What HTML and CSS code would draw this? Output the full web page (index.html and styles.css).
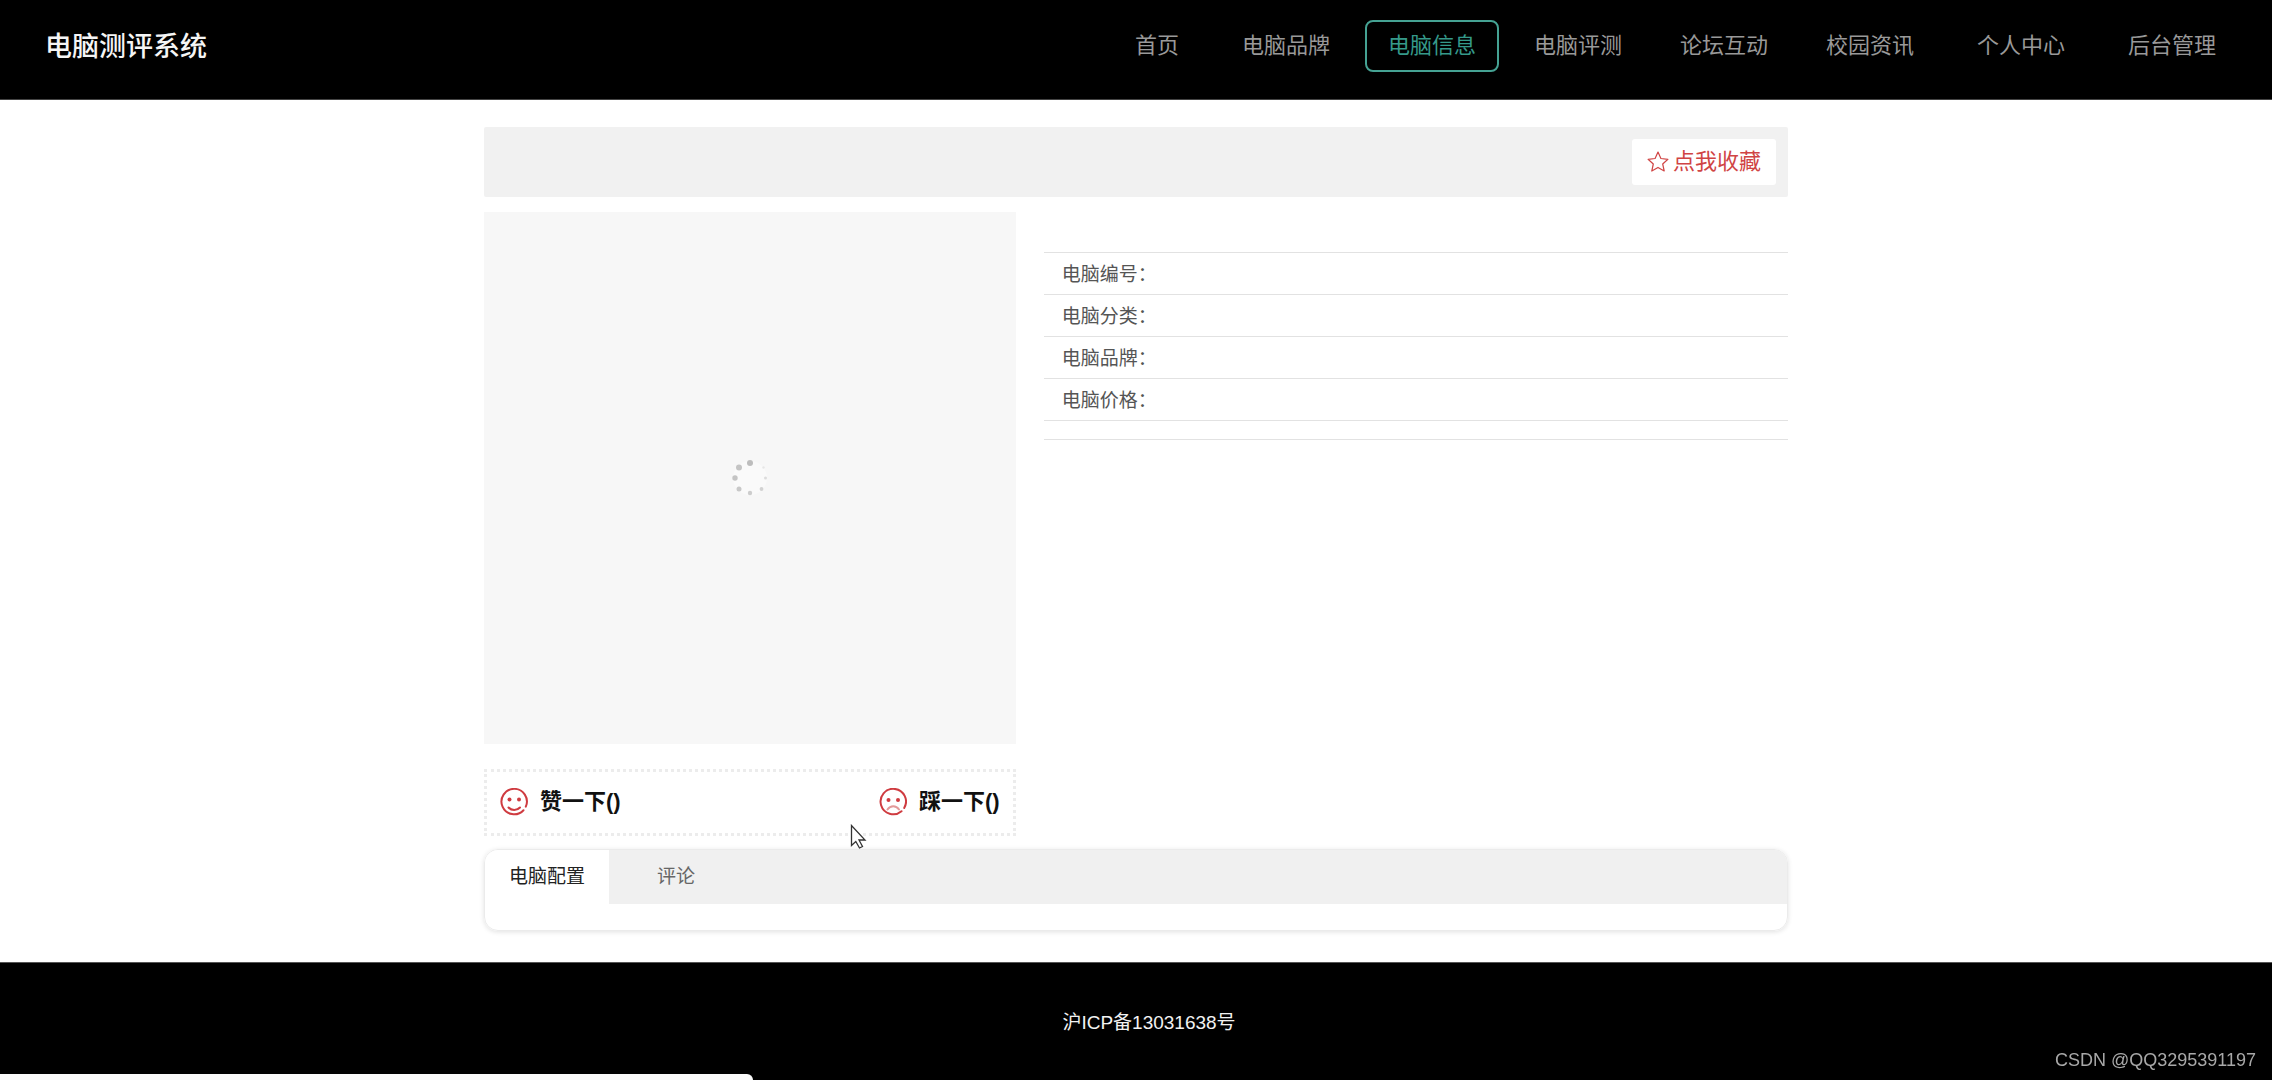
FILE: index.html
```html
<!DOCTYPE html>
<html lang="zh-CN">
<head>
<meta charset="utf-8">
<meta name="viewport" content="width=device-width, initial-scale=1">
<title>电脑测评系统</title>
<link rel="stylesheet" href="styles.css">
</head>
<body>
<header class="site-header">
  <div class="logo">电脑测评系统</div>
  <nav class="nav">
    <a class="nav-link nav-link-wide" href="#">首页</a>
    <a class="nav-link" href="#">电脑品牌</a>
    <a class="nav-link active" href="#">电脑信息</a>
    <a class="nav-link" href="#">电脑评测</a>
    <a class="nav-link" href="#">论坛互动</a>
    <a class="nav-link nav-link-wide" href="#">校园资讯</a>
    <a class="nav-link nav-link-wide" href="#">个人中心</a>
    <a class="nav-link" href="#">后台管理</a>
  </nav>
</header>

<main class="content">
  <div class="title-bar">
    <button class="favorite" type="button">
      <svg width="22" height="22" viewBox="0 0 22 22" fill="none" stroke="currentColor" stroke-width="1.2" stroke-linejoin="round"><path d="M11 1l2.900 6.500 7 .8-5.200 4.700 1.500 7-6.200-3.600L4.800 20l1.500-7L1.100 8.300l7-.8z"/></svg>
      <span>点我收藏</span>
    </button>
  </div>

  <div class="product">
    <div class="gallery">
      <div class="picture">
        <svg width="40" height="40" viewBox="0 0 40 40">
          <circle cx="20" cy="20" r="17" fill="#fafafa"/>
          <circle cx="20" cy="5" r="3" fill="#bdbdbd"/>
          <circle cx="9" cy="9.500" r="3" fill="#c4c4c4"/>
          <circle cx="5" cy="20" r="2.700" fill="#c4c4c4"/>
          <circle cx="9" cy="31" r="2.500" fill="#c8c8c8"/>
          <circle cx="20" cy="35" r="2.200" fill="#cdcdcd"/>
          <circle cx="31.500" cy="31" r="1.900" fill="#d2d2d2"/>
          <circle cx="35.500" cy="20" r="1.500" fill="#dcdcdc"/>
          <circle cx="33.500" cy="9.500" r="1.200" fill="#e6e6e6"/>
        </svg>
      </div>
      <div class="votes">
        <button class="vote" type="button">
          <svg width="28" height="28" viewBox="0 0 28 28" fill="none" stroke="#cf3b40" stroke-width="2" stroke-linecap="round"><path d="M23.500 22.200A12.700 12.700 0 1 1 25.800 18.700"/><circle cx="9.500" cy="11.500" r="2" fill="#cf3b40" stroke="none"/><circle cx="19" cy="11.500" r="2" fill="#cf3b40" stroke="none"/><path d="M8.500 19.500c3 3.300 8.500 3.300 11.500 0"/></svg>
          <span>赞一下()</span>
        </button>
        <button class="vote" type="button">
          <svg width="28" height="28" viewBox="0 0 28 28" fill="none" stroke="#cf3b40" stroke-width="2" stroke-linecap="round"><path d="M22.500 23.200A12.700 12.700 0 1 1 25.200 20"/><circle cx="9.500" cy="12" r="2" fill="#cf3b40" stroke="none"/><circle cx="19" cy="12" r="2" fill="#cf3b40" stroke="none"/><path stroke="#e29a9a" d="M8.500 21.500c3-4.300 8.500-4.300 11.500 0"/></svg>
          <span>踩一下()</span>
        </button>
        <svg class="pointer" width="18" height="26" viewBox="0 0 18 26"><path d="M1.500 1.500v20l4.300-4 3.700 6.500 3-1.500-3.500-6.500H15z" fill="#fff" stroke="#333" stroke-width="1.300"/></svg>
      </div>
    </div>

    <dl class="details">
      <div class="detail"><dt>电脑编号：</dt><dd></dd></div>
      <div class="detail"><dt>电脑分类：</dt><dd></dd></div>
      <div class="detail"><dt>电脑品牌：</dt><dd></dd></div>
      <div class="detail"><dt>电脑价格：</dt><dd></dd></div>
    </dl>
  </div>

  <section class="tab-card">
    <div class="tabs" role="tablist">
      <button class="tab selected" type="button" role="tab" aria-selected="true">电脑配置</button>
      <button class="tab" type="button" role="tab" aria-selected="false">评论</button>
    </div>
    <div class="tab-panel" role="tabpanel"></div>
  </section>
</main>

<footer class="site-footer">
  <p class="record">沪ICP备13031638号</p>
</footer>
<div class="status-bar"></div>
<div class="watermark">CSDN @QQ3295391197</div>
</body>
</html>
```
FILE: styles.css
```css
* {
  box-sizing: border-box;
}

body {
  display: flex;
  flex-direction: column;
  min-height: 100vh;
  margin: 0;
  background: #fff;
  color: #333;
  font-family: "Liberation Sans", "Noto Sans CJK SC", sans-serif;
  font-size: 19px;
}

button {
  border: 0;
  background: none;
  font-family: inherit;
  cursor: pointer;
}

.site-header {
  display: flex;
  justify-content: space-between;
  align-items: flex-start;
  height: 100px;
  padding: 20px 33px 0 45px;
  border-bottom: 1px solid #444;
  background: #000;
}

.logo {
  color: #f5f5f5;
  font-size: 27px;
  font-weight: 500;
  line-height: 54px;
}

.nav {
  display: flex;
  gap: 12px;
}

.nav-link {
  padding: 0 21px;
  border: 2px solid transparent;
  border-radius: 8px;
  color: #999;
  font-size: 22px;
  line-height: 48px;
  text-decoration: none;
  white-space: nowrap;
}

.nav-link-wide {
  margin-right: 5px;
}

.nav-link.active {
  border-color: #45a293;
  color: #35998a;
}

.content {
  width: 100%;
  max-width: 1304px;
  margin: 0 auto;
  padding: 27px 0 31px;
}

.title-bar {
  display: flex;
  justify-content: flex-end;
  align-items: center;
  height: 70px;
  padding-right: 12px;
  border-radius: 2px;
  background: #f1f1f1;
}

.favorite {
  display: flex;
  align-items: center;
  gap: 4px;
  height: 46px;
  padding: 0 15px;
  border-radius: 3px;
  background: #fff;
  color: #d04444;
  font-size: 22px;
  line-height: 26px;
}

.product {
  display: grid;
  grid-template-columns: 5fr 7fr;
  gap: 28px;
  margin-top: 15px;
}

.picture {
  display: flex;
  justify-content: center;
  align-items: center;
  aspect-ratio: 1;
  background: #f7f7f7;
}

.votes {
  position: relative;
  display: flex;
  justify-content: space-between;
  align-items: center;
  height: 67px;
  margin-top: 25px;
  padding: 0 13px;
  border: 3px dotted #ececec;
}

.vote {
  display: flex;
  align-items: center;
  gap: 12px;
  padding: 0;
  color: #111;
  font-size: 22px;
  font-weight: 700;
  line-height: 28px;
}

.pointer {
  position: absolute;
  top: 52px;
  left: 363px;
  z-index: 1;
}

.details {
  margin: 40px 0 0;
}

.detail {
  display: flex;
  height: 42px;
  padding: 0 18px;
  border-top: 1px solid #e2e2e2;
  color: #555;
  line-height: 44px;
}

.detail dd {
  margin: 0;
}

.details::after {
  content: "";
  display: block;
  height: 18px;
  border: 1px solid #e2e2e2;
  border-width: 1px 0;
}

.tab-card {
  margin-top: 13px;
  border: 1px solid #ebebeb;
  border-radius: 14px;
  box-shadow: 0 1px 5px rgba(0, 0, 0, .12);
  overflow: hidden;
}

.tabs {
  display: flex;
  gap: 24px;
  background: #f0f0f0;
}

.tab {
  height: 54px;
  padding: 0 24px;
  color: #666;
  font-size: 19px;
  line-height: 24px;
}

.tab.selected {
  background: #fff;
  color: #222;
}

.tab-panel {
  height: 26px;
}

.site-footer {
  flex: 1;
  padding: 46px 0 24px 26px;
  border-top: 1px solid #555;
  background: #000;
  color: #f2f2f2;
  text-align: center;
}

.record {
  margin: 0;
  line-height: 27px;
}

.status-bar {
  position: fixed;
  bottom: 0;
  left: 0;
  width: 753px;
  max-width: 100%;
  height: 6px;
  border-radius: 0 6px 0 0;
  background: #fafafa;
}

.watermark {
  position: fixed;
  right: 16px;
  bottom: 8px;
  color: #a8a8a8;
  font-size: 18px;
  line-height: 24px;
}
```
